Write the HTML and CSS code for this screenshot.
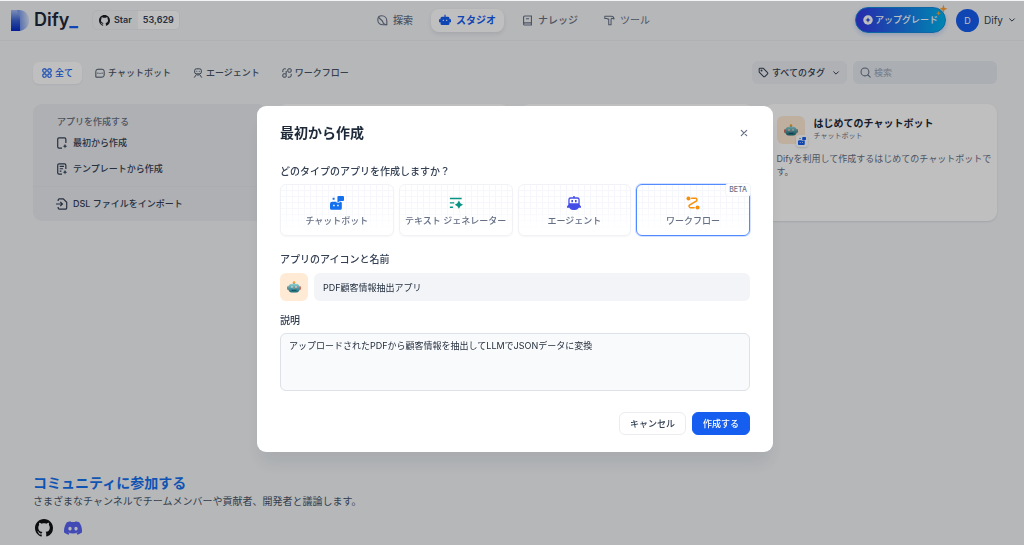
FILE: index.html
```html
<!DOCTYPE html>
<html lang="ja">
<head>
<meta charset="utf-8">
<meta name="viewport" content="width=device-width, initial-scale=1">
<title>スタジオ - Dify</title>
<link rel="stylesheet" href="styles.css">
</head>
<body>
<svg class="defs" aria-hidden="true">
  <defs>
    <linearGradient id="logo-a" x1="0" y1="0" x2="0" y2="1"><stop offset="0" stop-color="#a9bff5"/><stop offset="0.5" stop-color="#3c63d4"/><stop offset="1" stop-color="#0428c4"/></linearGradient>
    <linearGradient id="logo-b" x1="0" y1="0.6" x2="1" y2="0.4"><stop offset="0" stop-color="#3d6be8"/><stop offset="1" stop-color="#d9e3f5"/></linearGradient>
    <linearGradient id="bot-face" x1="0" y1="0" x2="0" y2="1"><stop offset="0" stop-color="#8fd0d3"/><stop offset="0.55" stop-color="#4597a3"/><stop offset="1" stop-color="#1d6675"/></linearGradient>
    <symbol id="github" viewBox="0 0 16 16"><path fill="currentColor" d="M8 0C3.58 0 0 3.58 0 8c0 3.54 2.29 6.53 5.47 7.59.4.07.55-.17.55-.38 0-.19-.01-.82-.01-1.49-2.01.37-2.53-.49-2.69-.94-.09-.23-.48-.94-.82-1.13-.28-.15-.68-.52-.01-.53.63-.01 1.08.58 1.23.82.72 1.21 1.87.87 2.33.66.07-.52.28-.87.51-1.07-1.78-.2-3.64-.89-3.64-3.95 0-.87.31-1.59.82-2.15-.08-.2-.36-1.02.08-2.12 0 0 .67-.21 2.2.82.64-.18 1.32-.27 2-.27s1.36.09 2 .27c1.53-1.04 2.2-.82 2.2-.82.44 1.1.16 1.92.08 2.12.51.56.82 1.27.82 2.15 0 3.07-1.87 3.75-3.65 3.95.29.25.54.73.54 1.48 0 1.07-.01 1.93-.01 2.2 0 .21.15.46.55.38A8.01 8.01 0 0 0 16 8c0-4.42-3.58-8-8-8z"/></symbol>
    <symbol id="chevron" viewBox="0 0 12 12"><path d="M2.5 4.2 6 7.7l3.5-3.5" fill="none" stroke="currentColor" stroke-width="1.5" stroke-linecap="round" stroke-linejoin="round"/></symbol>
    <symbol id="chatbot" viewBox="0 0 16 16"><path fill="currentColor" d="M2.500 6.500H7.400a1 1 0 0 0 1 1.300h1.200a2 2 0 0 0 1.500-.8l.7-.4h.6A1.800 1.800 0 0 1 13.500 8.400V14a1.800 1.800 0 0 1-1.800 1.800H1.800A1.800 1.800 0 0 1 0 14V9a2.500 2.500 0 0 1 2.500-2.500zM3 2h2.200v2.200H3z"/><path fill="currentColor" d="M8.500 1.200A1.200 1.200 0 0 1 9.700 0h5.100A1.200 1.200 0 0 1 16 1.200v3.400a1.200 1.200 0 0 1-1.200 1.200h-3.300L9.300 7.200h-.8z"/><path fill="#fff" d="M3.600 10h1.700v1.700H3.600zM8.200 10h1.700v1.700H8.200z"/></symbol>
    <symbol id="robot" viewBox="0 0 20 20"><circle cx="10" cy="3.500" r="1.800" fill="#f5a02f"/><path fill="#6a8790" d="M9 4.500h2v2H9z"/><rect x="0" y="9" width="3" height="5" rx="1.200" fill="#cf6a5c"/><rect x="17" y="9" width="3" height="5" rx="1.200" fill="#cf6a5c"/><path fill="url(#bot-face)" d="M7.500 5.500h5c4 0 6 2.500 6 6S16.500 18 13 18H7c-3.500 0-5.500-3-5.500-6.500s2-6 6-6z"/><circle cx="7" cy="10" r="1.500" fill="#d6ebe7"/><circle cx="13" cy="10" r="1.500" fill="#d6ebe7"/><circle cx="7" cy="10" r=".8" fill="#b5483d"/><circle cx="13" cy="10" r=".8" fill="#b5483d"/><path fill="#e77b59" d="m10 10.500 1 2H9z"/><path fill="#164f5d" d="M6.500 14h7v1.500h-7z"/></symbol>
  </defs>
</svg>

<div class="page">
  <header class="topbar">
    <div class="brand">
      <a class="logo" href="#">
        <svg class="logo-mark" viewBox="0 0 18 21" aria-hidden="true"><path fill="url(#logo-b)" d="M3 0h5c6 0 10 4.500 10 10.500S14 20 9 21z"/><path fill="url(#logo-a)" d="M0 0h6c2 4 3 6 3 10v11H0z"/></svg>
        <span class="logo-name">Dify<b>_</b></span>
      </a>
      <a class="stars" href="#">
        <span class="stars-label"><svg class="i11" aria-hidden="true"><use href="#github"/></svg>Star</span>
        <span class="stars-count">53,629</span>
      </a>
    </div>
    <nav class="mainnav">
      <a href="#"><svg class="i11" viewBox="0 0 14 14" fill="none" stroke="currentColor" stroke-width="1.400" stroke-linejoin="round" aria-hidden="true"><path d="M2 2.500C3 1.500 4.500 1 6 1c4 0 6.500 3 6.500 6.500v5H7.500C4 12.500 1 10 1 6.500 1 5 1.300 3.500 2 2.500z"/><path d="M2 2.500c1 3 5 3.500 5.500 6.500.2 1.500 2.500 3.500 5 3.500"/></svg>探索</a>
      <a class="active" href="#"><svg class="i12" viewBox="0 0 16 16" aria-hidden="true"><path fill="currentColor" d="M7.200 1h1.600v2.500H12A2 2 0 0 1 14 5.500V7h2v4h-2v1.500a2 2 0 0 1-2 2H4a2 2 0 0 1-2-2V11H0V7h2V5.500a2 2 0 0 1 2-2h3.200z"/><path fill="#fff" d="M5 7.500h1.500v1.800H5zM9.500 7.500H11v1.800H9.500z"/></svg>スタジオ</a>
      <a href="#"><svg class="i11" viewBox="0 0 14 14" fill="none" stroke="currentColor" stroke-width="1.400" aria-hidden="true"><path d="M12 10H3.300A1.600 1.600 0 0 0 2 11.400V2.800A1.500 1.500 0 0 1 3.500 1.300H12v11.400H3.300A1.400 1.400 0 0 1 2 11.300M5 4.700h4"/></svg>ナレッジ</a>
      <a class="light" href="#"><svg class="i11" viewBox="0 0 14 14" fill="none" stroke="currentColor" stroke-width="1.300" stroke-linejoin="round" aria-hidden="true"><path d="M1 1.500h8.500c1.800 0 3 1.200 3.300 3.500l-3-.8-.8 1v7.300H6V5.200H4.700L4 4.500H1z"/></svg>ツール</a>
    </nav>
    <div class="account">
      <button class="upgrade" type="button">
        <svg class="i10" viewBox="0 0 12 12" aria-hidden="true"><circle cx="6" cy="6" r="5.700" fill="#fff"/><path fill="#2b45df" d="m6 2.800 1 2.200 2.300 1-2.300 1-1 2.200L5 7 2.700 6 5 5z"/></svg>アップグレード
        <svg class="sparkle" viewBox="0 0 12 12" aria-hidden="true"><path fill="#ff9d33" d="m7.500.5.9 3.200 3.100 1.100-3.100 1.300L7.500 9.500 6.400 6.100 3.500 4.800l2.900-1.100zM2.500 7l.7 1.500 1.600.7-1.600.7-.7 1.600-.7-1.600L.3 9.200l1.500-.7z"/></svg>
      </button>
      <button class="user" type="button"><span class="avatar">D</span>Dify<svg class="i8" aria-hidden="true"><use href="#chevron"/></svg></button>
    </div>
  </header>

  <main class="content">
    <div class="filters">
      <div class="tabs">
        <button class="tab active" type="button"><svg class="i10" viewBox="0 0 12 12" fill="none" stroke="currentColor" stroke-width="1.300" aria-hidden="true"><rect x="1" y="1" width="4" height="4" rx="1.500"/><rect x="7" y="1" width="4" height="4" rx="1.500"/><rect x="1" y="7" width="4" height="4" rx="1.500"/><rect x="7" y="7" width="4" height="4" rx="1.500"/></svg>全て</button>
        <button class="tab" type="button"><svg class="i10" viewBox="0 0 12 12" fill="none" stroke="currentColor" stroke-width="1.200" aria-hidden="true"><path d="M1 11V4a2.500 2.500 0 0 1 2.500-2.500h5A2.500 2.500 0 0 1 11 4v4.500A2.500 2.500 0 0 1 8.500 11z"/><path d="M3.500 5.500v1.500M8.500 5.500v1.500M5.300 6.500h1.400"/></svg>チャットボット</button>
        <button class="tab" type="button"><svg class="i10" viewBox="0 0 12 12" fill="none" stroke="currentColor" stroke-width="1.200" aria-hidden="true"><rect x="2" y="1" width="8" height="6" rx="2"/><path d="M4.500 3.500v1M7.500 3.500v1M4 7l2 2 2-2M1.500 11.500 4 8M10.500 11.500 8 8"/></svg>エージェント</button>
        <button class="tab" type="button"><svg class="i10" viewBox="0 0 12 12" fill="none" stroke="currentColor" stroke-width="1.200" aria-hidden="true"><path d="M1 5V3a2 2 0 0 1 2-2h1.500"/><rect x="7" y="1" width="4" height="4" rx="1"/><rect x="1" y="7" width="4" height="4" rx="1"/><path d="M5 3.500v3.500M7 11h2a2 2 0 0 0 2-2V7"/></svg>ワークフロー</button>
      </div>
      <div class="search-tools">
        <div class="tagpick">
          <svg class="i11" viewBox="0 0 14 14" fill="none" stroke="currentColor" stroke-width="1.300" stroke-linejoin="round" aria-hidden="true"><path d="M1.500 2.500a1 1 0 0 1 1-1h4l5.700 5.700a1 1 0 0 1 0 1.500l-3.500 3.500a1 1 0 0 1-1.500 0L1.500 6.500z"/><circle cx="4.500" cy="4.500" r=".6"/></svg>
          <select aria-label="タグ"><option>すべてのタグ</option></select>
          <svg class="i8" aria-hidden="true"><use href="#chevron"/></svg>
        </div>
        <label class="search">
          <svg class="i11" viewBox="0 0 14 14" fill="none" stroke="currentColor" stroke-width="1.300" stroke-linecap="round" aria-hidden="true"><circle cx="6.300" cy="6.300" r="5"/><path d="m10 10 3 3"/></svg>
          <input type="search" placeholder="検索" aria-label="検索">
        </label>
      </div>
    </div>

    <div class="cards">
      <section class="card create">
        <h2>アプリを作成する</h2>
        <button type="button"><svg class="i12" viewBox="0 0 14 14" fill="none" stroke="currentColor" stroke-width="1.400" aria-hidden="true"><path d="M7 13H3.500A1.500 1.500 0 0 1 2 11.500v-9A1.500 1.500 0 0 1 3.500 1H10a1.500 1.500 0 0 1 1.500 1.500V7"/><path fill="currentColor" stroke="none" d="m10.500 8 .8 1.900 1.900.8-1.900.8-.8 1.900-.8-1.900-1.900-.8 1.900-.8z"/></svg>最初から作成</button>
        <button type="button"><svg class="i12" viewBox="0 0 14 14" fill="none" stroke="currentColor" stroke-width="1.400" aria-hidden="true"><path d="M7 13H3.500A1.500 1.500 0 0 1 2 11.500v-9A1.500 1.500 0 0 1 3.500 1H10a1.500 1.500 0 0 1 1.500 1.500V7M4.300 4h5M4.300 6.700h4M4.300 9.400h2"/><path fill="currentColor" stroke="none" d="m10.500 8 .8 1.900 1.900.8-1.900.8-.8 1.900-.8-1.900-1.900-.8 1.900-.8z"/></svg>テンプレートから作成</button>
        <button class="import" type="button"><svg class="i12" viewBox="0 0 14 14" fill="none" stroke="currentColor" stroke-width="1.400" aria-hidden="true"><path d="M2.500 3.500V2.500A1.500 1.500 0 0 1 4 1h4.500L12.500 5v6.500A1.500 1.500 0 0 1 11 13H4a1.500 1.500 0 0 1-1.500-1.500v-1M0 7h7M5 4.500 7.500 7 5 9.500"/></svg>DSL ファイルをインポート</button>
      </section>
      <div class="card"></div>
      <div class="card"></div>
      <article class="card app">
        <div class="app-head">
          <span class="emoji"><svg class="i14" aria-hidden="true"><use href="#robot"/></svg><span class="kind"><svg class="i8" aria-hidden="true"><use href="#chatbot"/></svg></span></span>
          <div><h3>はじめてのチャットボット</h3><p class="mode">チャットボット</p></div>
        </div>
        <p class="desc">Difyを利用して作成するはじめてのチャットボットです。</p>
      </article>
    </div>
  </main>

  <footer class="community">
    <h2>コミュニティに参加する</h2>
    <p>さまざまなチャンネルでチームメンバーや貢献者、開発者と議論します。</p>
    <div class="social">
      <a href="#" aria-label="GitHub"><svg class="i18" aria-hidden="true"><use href="#github"/></svg></a>
      <a class="discord" href="#" aria-label="Discord"><svg class="i18" viewBox="0 0 24 24" aria-hidden="true"><path fill="currentColor" d="M20.317 4.370a19.800 19.800 0 0 0-4.885-1.515c-.21.375-.45.880-.61 1.250a18.300 18.300 0 0 0-5.487 0c-.17-.380-.410-.875-.620-1.250a19.700 19.700 0 0 0-4.885 1.515C.533 9.046-.320 13.580.099 18.058a19.900 19.900 0 0 0 5.993 3.030c.46-.630.870-1.300 1.226-1.994a13 13 0 0 1-1.872-.892l.37-.290a14.200 14.200 0 0 0 12.370 0l.37.290c-.6.350-1.220.645-1.873.892.36.698.770 1.362 1.225 1.993a19.800 19.800 0 0 0 6.002-3.030c.5-5.177-.838-9.674-3.593-13.687zM8.020 15.330c-1.183 0-2.157-1.085-2.157-2.419s.955-2.419 2.157-2.419c1.210 0 2.176 1.096 2.157 2.420 0 1.333-.956 2.418-2.157 2.418zm7.975 0c-1.183 0-2.157-1.085-2.157-2.419s.955-2.419 2.157-2.419c1.210 0 2.176 1.096 2.157 2.420 0 1.333-.946 2.418-2.157 2.418z"/></svg></a>
    </div>
  </footer>
</div>

<div class="overlay">
  <form class="modal" role="dialog" aria-modal="true" aria-labelledby="dialog-title">
    <div class="modal-head">
      <h1 id="dialog-title">最初から作成</h1>
      <button class="close" type="button" aria-label="閉じる"><svg class="i12" viewBox="0 0 12 12" fill="none" stroke="currentColor" stroke-width="1.200" stroke-linecap="round" aria-hidden="true"><path d="m3.300 3.300 5.400 5.400M8.700 3.300 3.300 8.700"/></svg></button>
    </div>

    <fieldset class="types">
      <legend>どのタイプのアプリを作成しますか？</legend>
      <div class="type-grid">
        <label class="type blue"><input type="radio" name="type"><svg class="i14" aria-hidden="true"><use href="#chatbot"/></svg><span>チャットボット</span></label>
        <label class="type green"><input type="radio" name="type"><svg class="i14" viewBox="0 0 16 16" aria-hidden="true"><path fill="currentColor" d="M1 2h13.500v1.700H1zM1 7h5v1.700H1zM1 12h3.500v1.700H1zM11.300 5.200l1.700 3 3 1.700-3 1.700-1.700 3-1.700-3-3-1.700 3-1.700z"/></svg><span>テキスト ジェネレーター</span></label>
        <label class="type indigo"><input type="radio" name="type"><svg class="i14" viewBox="0 0 16 16" aria-hidden="true"><path fill="currentColor" d="M7.200 0h1.600v1.500H12A2.500 2.500 0 0 1 14.500 4v6l1.500 2v1.300h-2.500A6 6 0 0 1 8 16a6 6 0 0 1-5.500-2.700H0V12l1.500-2V4A2.500 2.500 0 0 1 4 1.500h3.200z"/><path fill="#fff" d="M4 3.200h8a1 1 0 0 1 1 1V8.300H3V4.200a1 1 0 0 1 1-1z"/><path fill="currentColor" d="M5 4.700h1.900v2.300H5zM9.100 4.700H11v2.300H9.100z"/></svg><span>エージェント</span></label>
        <label class="type orange"><input type="radio" name="type" checked><svg class="i14" viewBox="0 0 16 16" aria-hidden="true"><circle cx="2.800" cy="2.800" r="2.300" fill="currentColor"/><circle cx="13.200" cy="13.200" r="2.300" fill="currentColor"/><path fill="none" stroke="currentColor" stroke-width="1.700" stroke-linecap="round" d="M6.500 2.600h4.300a1.800 1.800 0 0 1 1.300 3L4 10.300a1.800 1.800 0 0 0 1 3.100h4.300"/></svg><span>ワークフロー</span><em class="beta">BETA</em></label>
      </div>
    </fieldset>

    <div class="field">
      <label for="app-name">アプリのアイコンと名前</label>
      <div class="name-row">
        <button class="emoji" type="button" aria-label="アイコンを選択"><svg class="i14" aria-hidden="true"><use href="#robot"/></svg></button>
        <input id="app-name" type="text" value="PDF顧客情報抽出アプリ">
      </div>
    </div>

    <div class="field">
      <label for="app-desc">説明</label>
      <textarea id="app-desc" rows="3">アップロードされたPDFから顧客情報を抽出してLLMでJSONデータに変換</textarea>
    </div>

    <div class="actions">
      <button class="btn" type="button">キャンセル</button>
      <button class="btn primary" type="submit">作成する</button>
    </div>
  </form>
</div>
</body>
</html>
```

FILE: styles.css
```css
* { box-sizing: border-box; }
html { height: 100%; }
body {
  margin: 0;
  min-height: 100%;
  display: flex;
  background: #f2f4f7;
  color: #344054;
  font: 9px/16px Inter, "Noto Sans CJK JP", sans-serif;
}
h1, h2, h3, p { margin: 0; }
button, input, select, textarea { font: inherit; color: inherit; border: 0; margin: 0; padding: 0; background: none; outline: 0; }
button { display: flex; align-items: center; justify-content: center; white-space: nowrap; }
a { color: inherit; text-decoration: none; }
svg { flex: none; display: block; }
.defs { position: absolute; width: 0; height: 0; }
.i8 { width: 8px; height: 8px; }
.i10 { width: 10px; height: 10px; }
.i11 { width: 11px; height: 11px; }
.i12 { width: 12px; height: 12px; }
.i14 { width: 14px; height: 14px; }
.i18 { width: 18px; height: 18px; }

.page { flex: 1; min-height: 100vh; display: flex; flex-direction: column; }

/* Top bar */
.topbar {
  display: grid;
  grid-template-columns: 1fr auto 1fr;
  align-items: center;
  height: 41px;
  padding: 0 8px 0 11px;
  border-bottom: 1px solid #eaecf0;
}
.brand, .account, .mainnav { display: flex; align-items: center; }
.brand { gap: 14px; }
.logo { display: flex; align-items: center; gap: 5px; }
.logo-mark { width: 18px; height: 21px; }
.logo-name { color: #1d2939; font-size: 18px; line-height: 24px; font-weight: 600; }
.logo-name b { color: #155eef; font-weight: 800; }
.stars { display: flex; border-radius: 5px; border: 1px solid #eaecf0; overflow: hidden; font-weight: 600; line-height: 18px; }
.stars-label { display: flex; align-items: center; gap: 4px; padding: 0 6px; }
.stars-label svg { color: #1b1f24; }
.stars-count { background: #fff; padding: 0 5px; }
.mainnav { gap: 10px; font-size: 10px; font-weight: 500; color: #667085; }
.mainnav a { display: flex; align-items: center; gap: 5px; height: 23px; padding: 0 8px; border-radius: 8px; }
.mainnav .active { background: #fff; color: #155eef; font-weight: 700; box-shadow: 0 2px 4px #10182818; }
.mainnav .light { font-weight: 400; }
.account { justify-content: flex-end; gap: 10px; }
.upgrade {
  position: relative;
  gap: 2px;
  height: 26px;
  padding: 0 7px;
  border-radius: 13px;
  border: 1px solid #1388d8;
  background: linear-gradient(90deg, #3538e6, #00b2ee);
  color: #fff;
  font-weight: 500;
  box-shadow: 0 2px 4px #155eef33;
}
.sparkle { position: absolute; top: -4px; right: -3px; width: 12px; height: 12px; }
.user { gap: 5px; font-size: 10px; }
.avatar { width: 23px; line-height: 23px; border-radius: 50%; background: #155eef; color: #fff; font-size: 9px; }

/* Filters */
.content { padding: 20px 27px 0 33px; }
.filters { display: flex; justify-content: space-between; align-items: center; }
.tabs, .search-tools { display: flex; align-items: center; gap: 6px; }
.tabs { gap: 4px; }
.tab { gap: 3px; height: 22px; padding: 0 9px; border-radius: 6px; font-weight: 500; color: #475467; }
.tab.active { background: #fff; color: #155eef; box-shadow: 0 1px 2px #1018280d; }
.tagpick, .search { display: flex; align-items: center; height: 23px; border-radius: 6px; background: #eaecf0; }
.tagpick { gap: 3px; padding: 0 7px 0 6px; font-weight: 500; color: #344054; }
.tagpick select { appearance: none; width: 57px; }
.search { width: 144px; gap: 3px; padding: 0 7px; background: #e4e8ee; color: #667085; }
.search input { flex: 1; min-width: 0; }
.search input::placeholder { color: #98a2b3; opacity: 1; }

/* App cards */
.cards { display: grid; grid-template-columns: repeat(4, 1fr); gap: 10px; margin-top: 20px; }
.card { min-height: 117px; border-radius: 9px; background: #fff; box-shadow: 0 1px 2px #1018281a; }
.create { background: #e9ebf0; padding-top: 10px; box-shadow: none; }
.create h2 { padding-left: 24px; font-size: 9px; line-height: 16px; font-weight: 500; color: #667085; }
.create button { width: 100%; height: 26px; gap: 5px; padding-left: 23px; justify-content: flex-start; font-weight: 500; }
.create .import { height: 35px; margin-top: 4px; border-top: 1px solid #e4e7ec; }
.app { padding: 12px 4px 12px 13px; }
.app-head { display: flex; gap: 9px; }
.emoji { position: relative; display: flex; align-items: center; justify-content: center; width: 28px; height: 28px; border-radius: 6px; background: #ffead5; flex: none; }
.kind { position: absolute; right: -3px; bottom: -3px; padding: 2px; border-radius: 3px; background: #fff; color: #155eef; box-shadow: 0 1px 2px #10182826; }
.app h3 { font-size: 10px; line-height: 14px; font-weight: 700; color: #1d2939; white-space: nowrap; }
.mode { font-size: 7px; line-height: 12px; color: #667085; }
.desc { margin-top: 8px; line-height: 13px; color: #667085; word-break: break-all; }

/* Community */
.community { margin-top: auto; padding: 0 33px 8px; }
.community h2 { color: #1570ef; font-size: 14px; line-height: 20px; font-weight: 600; }
.community p { font-size: 10px; line-height: 16px; color: #475467; }
.social { display: flex; gap: 11px; margin-top: 10px; padding-left: 2px; color: #101214; }
.discord { color: #5865f2; }

/* Dialog */
.overlay {
  position: fixed;
  inset: 1px 0 0;
  display: flex;
  justify-content: center;
  align-items: flex-start;
  padding: 105px 0 0 6px;
  background: #00000040;
}
.modal {
  width: 516px;
  max-width: 100%;
  padding: 16px 23px 17px;
  border-radius: 9px;
  background: #fff;
  box-shadow: 0 14px 18px -3px #10182814;
}
.modal-head { display: flex; justify-content: space-between; align-items: center; }
.modal h1 { font-size: 14px; line-height: 22px; font-weight: 700; color: #1d2939; }
.close { color: #667085; }
.types { border: 0; padding: 0; margin: 19px 0 0; min-width: 0; }
.types legend, .field > label { display: block; padding: 0; font-size: 10px; line-height: 16px; font-weight: 500; color: #344054; }
.type-grid { display: grid; grid-template-columns: repeat(4, 1fr); gap: 5px; margin-top: 5px; }
.type {
  position: relative;
  display: flex;
  flex-direction: column;
  align-items: center;
  gap: 3px;
  height: 52px;
  padding-top: 11px;
  border: 1px solid #f0f2f5;
  border-radius: 6px;
  white-space: nowrap;
  background:
    linear-gradient(#ffffff00 20px, #fff 46px),
    repeating-linear-gradient(90deg, #ffffff00 0 5px, #f5f7fc 5px 6px),
    repeating-linear-gradient(#fff 0 5px, #f5f7fc 5px 6px);
  box-shadow: 0 1px 2px #1018280a;
}
.type span { font-weight: 500; color: #667085; }
.type input { position: absolute; opacity: 0; }
.type:has(:checked) { border: 1px solid #528bff; box-shadow: 0 0 0 1px #528bff40; }
.blue { color: #1570ef; }
.green { color: #099382; }
.indigo { color: #444ce7; }
.orange { color: #f79009; }
.beta { position: absolute; top: -2px; right: -2px; padding: 0 3px; border: 1px solid #f2f4f7; border-radius: 4px; background: #fff; color: #667085; font-size: 7px; line-height: 12px; font-style: normal; font-weight: 500; }
.field { margin-top: 15px; }
.name-row { display: flex; gap: 6px; margin-top: 6px; }
.name-row input { flex: 1; min-width: 0; height: 28px; padding: 0 9px; border-radius: 6px; background: #f2f4f7; }
.name-row input, .field textarea { color: #1d2939; }
.field + .field { margin-top: 11px; }
.field textarea { display: block; width: 100%; height: 58px; margin-top: 5px; padding: 4px 8px; border: 1px solid #dde1e8; border-radius: 6px; background: #f9fafb; resize: none; }
.actions { display: flex; justify-content: flex-end; gap: 6px; margin-top: 21px; }
.btn { height: 23px; padding: 0 10px; border: 1px solid #eaecf0; border-radius: 6px; background: #fff; font-weight: 500; }
.btn.primary { border-color: #155eef; background: #155eef; color: #fff; }
```
